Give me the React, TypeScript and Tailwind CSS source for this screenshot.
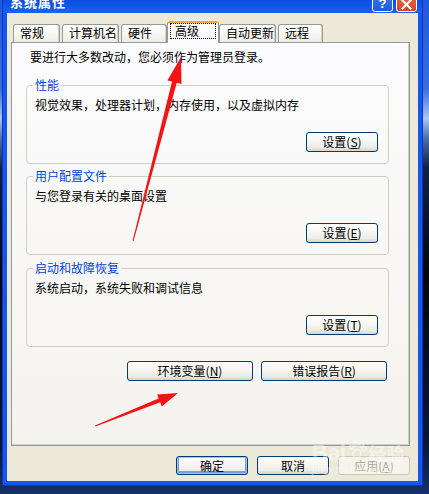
import React from "react";

const FONT = { fontFamily: '"Noto Sans CJK SC", "Noto Sans", "Liberation Sans", sans-serif' };

function XPButton({
  children,
  className = "",
  def = false,
  disabled = false,
}: {
  children: React.ReactNode;
  className?: string;
  def?: boolean;
  disabled?: boolean;
}) {
  const base =
    "flex items-center justify-center rounded-[3px] border text-[12px] leading-[14px] whitespace-nowrap";
  const look = disabled
    ? "border-[#C9C7BA] text-[#ACA899] bg-[#F5F4EA]"
    : "border-[#003C74] text-black bg-[linear-gradient(180deg,#FFFFFF_0%,#F7F6F2_45%,#ECEBE6_80%,#D8D3C8_100%)]";
  const d = def ? "shadow-[inset_0_0_0_1px_#A8C0F0,inset_0_-1px_0_2px_#7A9BEA]" : "";
  return <div className={`${base} ${look} ${d} ${className}`}>{children}</div>;
}

function Group({
  title,
  text,
  btn,
  mt,
}: {
  title: string;
  text: string;
  btn: React.ReactNode;
  mt: string;
}) {
  return (
    <fieldset className={`w-[363px] border border-[#D0D0BF] rounded-[4px] pb-[11px] ${mt}`}>
      <legend className="ml-[6px] px-[2px] text-[12px] leading-[14px] text-[#0046D5]">{title}</legend>
      <div className="mt-[6px] pl-[8px] text-[12px] leading-[14px] text-black">{text}</div>
      <div className="mt-[20px] flex justify-end pr-[10px]">
        <XPButton className="w-[72px] h-[20px]">{btn}</XPButton>
      </div>
    </fieldset>
  );
}

function Tab({ label, w, mr = "" }: { label: string; w: string; mr?: string }) {
  return (
    <div
      className={`${w} ${mr} h-[18px] border border-b-0 border-[#919B9C] rounded-t-[3px] bg-[linear-gradient(180deg,#FFFFFF_0%,#F6F5F0_60%,#ECEBE6_100%)] pl-[6px] flex items-center pb-[1px] text-[12px] leading-[14px] text-black shadow-[inset_-1px_0_0_#D6D2C2]`}
    >
      {label}
    </div>
  );
}

export default function App() {
  return (
    <div
      className="relative w-[429px] h-[494px] overflow-hidden bg-[linear-gradient(180deg,#2457D6_0%,#3A6FDA_18%,#A9C6EE_24%,#4E6FA8_28%,#12213F_34%,#04060C_55%,#0B1633_90%,#16306A_100%)]"
      style={FONT}
    >
      {/* window */}
      <div className="ml-[2px] w-[421px] h-[486px] bg-[#1656E8] border-l border-r border-b border-[#0831D9] flex flex-col">
        {/* title bar */}
        <div className="h-[13px] flex items-start overflow-hidden bg-[linear-gradient(180deg,#0A4FE0_0%,#1A62EE_100%)]">
          <div className="ml-[7px] -mt-[6px] text-[13px] leading-[16px] font-bold text-white tracking-[1px]">
            系统属性
          </div>
          <div className="ml-auto flex gap-[3px] mr-[5px] -mt-[9px]">
            <div className="w-[21px] h-[21px] rounded-[3px] border border-white bg-[linear-gradient(180deg,#3C7BF5_0%,#2259E3_100%)] flex items-end justify-center pb-[1px]">
              <span className="text-white font-bold text-[13px] leading-[13px]" style={{ fontFamily: '"Liberation Sans", sans-serif' }}>
                ?
              </span>
            </div>
            <div className="w-[21px] h-[21px] rounded-[3px] border border-white bg-[linear-gradient(180deg,#EB7252_0%,#D8441E_100%)] flex items-end justify-center pb-[1px]">
              <svg width="11" height="11" viewBox="0 0 11 11">
                <path d="M1.5 1.5 L9.5 9.5 M9.5 1.5 L1.5 9.5" stroke="white" strokeWidth="2.2" strokeLinecap="square" />
              </svg>
            </div>
          </div>
        </div>

        {/* body */}
        <div className="mx-[4px] flex-1 bg-[#ECE9D8] flex flex-col pt-[8px] mb-[4px]">
          {/* tabs */}
          <div className="ml-[6px] h-[21px] flex items-end">
            <Tab label="常规" w="w-[47px]" mr="mr-[2px]" />
            <Tab label="计算机名" w="w-[57px]" mr="mr-[2px]" />
            <Tab label="硬件" w="w-[46px]" />
            <div className="relative z-10 w-[52px] h-[22px] -mb-px border-x border-[#919B9C] border-t-2 border-t-[#F7A93A] rounded-t-[3px] bg-[#FCFCFE] pl-[2px]">
              <div className="w-[46px] h-[16px] border border-dotted border-black pl-[4px] flex items-center text-[12px] leading-[14px] text-black">
                高级
              </div>
            </div>
            <Tab label="自动更新" w="w-[57px]" mr="mr-[2px]" />
            <Tab label="远程" w="w-[45px]" />
          </div>

          {/* panel */}
          <div className="ml-[4px] w-[399px] h-[404px] border border-[#919B9C] shadow-[inset_-1px_-1px_0_#D0CEBF] bg-[linear-gradient(180deg,#FCFCFE_0%,#F4F3EE_100%)] pt-[7px] pl-[14px]">
            <div className="pl-[4px] text-[12px] leading-[14px] text-black">
              要进行大多数改动，您必须作为管理员登录。
            </div>
            <Group
              mt="mt-[14px]"
              title="性能"
              text="视觉效果，处理器计划，内存使用，以及虚拟内存"
              btn={
                <>
                  设置(<u>S</u>)
                </>
              }
            />
            <Group
              mt="mt-[5px]"
              title="用户配置文件"
              text="与您登录有关的桌面设置"
              btn={
                <>
                  设置(<u>E</u>)
                </>
              }
            />
            <Group
              mt="mt-[6px]"
              title="启动和故障恢复"
              text="系统启动，系统失败和调试信息"
              btn={
                <>
                  设置(<u>T</u>)
                </>
              }
            />
            <div className="mt-[14px] w-[363px] flex justify-end gap-[8px] pr-[2px]">
              <XPButton className="w-[126px] h-[20px]">
                环境变量(<u>N</u>)
              </XPButton>
              <XPButton className="w-[126px] h-[20px]">
                错误报告(<u>R</u>)
              </XPButton>
            </div>
          </div>

          {/* dialog buttons */}
          <div className="mt-[10px] flex justify-end gap-[9px] pr-[8px]">
            <XPButton className="w-[72px] h-[19px]" def>
              确定
            </XPButton>
            <XPButton className="w-[72px] h-[19px]">取消</XPButton>
            <XPButton className="w-[72px] h-[19px]" disabled>
              应用(<u>A</u>)
            </XPButton>
          </div>
        </div>
      </div>

      {/* red annotation arrows */}
      <svg className="absolute left-0 top-0 pointer-events-none" width="429" height="494" viewBox="0 0 429 494">
        <polygon
          points="181,57 181.5,84 176.8,82.8 133.6,241 132.6,240.8 172,81.6 167.4,80.4"
          fill="#F41414"
        />
        <polygon
          points="178,393 161.8,406.5 160.2,402.3 95.4,426.6 95,425.6 158.6,398.6 157.2,394.6"
          fill="#F41414"
        />
      </svg>

      {/* watermark */}
      <div className="absolute left-[312px] top-[440px] pointer-events-none opacity-45 text-white">
        <div className="flex items-end gap-[1px]">
          <span className="text-[22px] leading-[22px] font-bold" style={{ fontFamily: '"Liberation Sans", sans-serif' }}>
            Bai
          </span>
          <svg width="20" height="20" viewBox="0 0 22 22" className="mb-[4px]">
            <g fill="none" stroke="white" strokeWidth="2">
              <circle cx="11" cy="15" r="4.5" />
              <circle cx="5" cy="8" r="2.2" />
              <circle cx="10" cy="4" r="2.2" />
              <circle cx="16" cy="5" r="2.2" />
              <circle cx="19" cy="10" r="2" />
            </g>
          </svg>
          <span className="text-[18px] leading-[22px] font-bold">经验</span>
        </div>
        <div className="text-[10px] leading-[12px] tracking-[0.5px]" style={{ fontFamily: '"Liberation Sans", sans-serif' }}>
          jingyan.baidu.com
        </div>
      </div>
    </div>
  );
}
